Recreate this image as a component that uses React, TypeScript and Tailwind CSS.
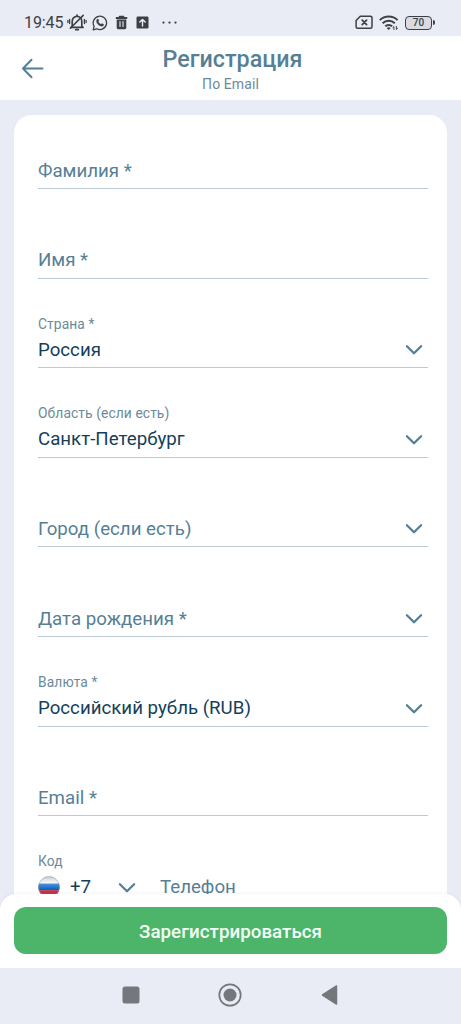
import type { ReactNode } from "react";

function Chevron() {
  return (
    <svg className="mt-px" width="18" height="12" viewBox="0 0 18 12" fill="none" stroke="#557f96" strokeWidth="2.3" strokeLinecap="round" strokeLinejoin="round">
      <path d="M1.9 2.2 9 9.3l7.1-7.1" />
    </svg>
  );
}

type FieldProps = { label?: string; value?: string; placeholder?: string; select?: boolean };

function Field({ label, value, placeholder, select }: FieldProps) {
  return (
    <div className="flex h-[89.6px] shrink-0 flex-col justify-end border-b border-[#bccbd3] pb-[5.4px] first:h-[74px]">
      {label && <div className="mb-[6px] h-4 text-[13.8px] leading-4 tracking-[0.1px] text-[#6b8a9b]">{label}</div>}
      <div className="flex h-6 items-center justify-between pr-[5px]">
        {value ? (
          <span className="text-[18.7px] leading-6 text-[#143f5b]">{value}</span>
        ) : (
          <span className="text-[18.7px] leading-6 text-[#557f96]">{placeholder}</span>
        )}
        {select && <Chevron />}
      </div>
    </div>
  );
}

function Flag() {
  return (
    <svg width="22" height="22" viewBox="0 0 22 22">
      <defs>
        <clipPath id="flag-round"><circle cx="11" cy="11" r="10.7" /></clipPath>
        <linearGradient id="flag-blue" x1="0" y1="0" x2="0" y2="1">
          <stop offset="0" stopColor="#4b97e2" />
          <stop offset="1" stopColor="#0b57b4" />
        </linearGradient>
        <linearGradient id="flag-white" x1="0" y1="0" x2="0" y2="1">
          <stop offset="0" stopColor="#c6cace" />
          <stop offset="1" stopColor="#ffffff" />
        </linearGradient>
      </defs>
      <g clipPath="url(#flag-round)">
        <path fill="url(#flag-white)" d="M0 0h22v8H0z" />
        <path fill="url(#flag-blue)" d="M0 7.4h22v7H0z" />
        <path fill="#c93340" d="M0 14.2h22V22H0z" />
      </g>
      <circle cx="11" cy="11" r="10.4" fill="none" stroke="#8b9299" strokeOpacity=".6" strokeWidth=".8" />
    </svg>
  );
}

function Glyph({ w, h, children }: { w: number; h: number; children: ReactNode }) {
  return (
    <svg className="shrink-0" width={w} height={h} viewBox={`0 0 ${w} ${h}`} fill="none" stroke="#3c4045" strokeLinecap="round" strokeLinejoin="round">
      {children}
    </svg>
  );
}

function StatusBar() {
  return (
    <div className="flex h-9 shrink-0 items-center pt-[9px] pr-[26px] pl-6 text-[#3c4045]">
      <span className="w-[43px] text-[16px] leading-5 tracking-[-0.1px] whitespace-nowrap">19:45</span>
      <div className="flex items-center">
        <Glyph w={20} h={17}>
          <path strokeWidth="1.7" d="M5.2 12.3V7.4c0-2.8 1.9-5 4.8-5s4.8 2.2 4.8 5v4.9l1.3 1.1H3.9l1.3-1.1M10 1.1v1M8.7 15.7h2.6" />
          <path strokeWidth="1.6" d="M3.4 14.2 16.2 1.4" />
          <path strokeWidth="1.3" d="M2.6 5.5v4M.9 6.4v2.2M17.4 5.5v4M19.1 6.4v2.2" />
        </Glyph>
        <span className="w-[5px]" />
        <Glyph w={16} h={16}>
          <path strokeWidth="1.3" d="M1.2 14.8 2.1 11.3a6.7 6.7 0 1 1 2.6 2.5z" />
          <path fill="#3c4045" strokeWidth=".2" d="M5.2 4.3c.5-.5 1-.4 1.2.1l.5 1.2c.1.4-.1.7-.6 1.1.7 1.3 1.5 2 2.8 2.6.5-.7.8-.9 1.1-.7l1.3.6c.4.2.4.5.2 1-.4.9-1.3 1.3-2.2 1.1-2.7-.6-4.6-2.4-5.1-4.8-.1-.8.2-1.6.8-2.2z" />
        </Glyph>
        <span className="w-[7px]" />
        <Glyph w={13} h={15}>
          <path fill="#3c4045" stroke="none" d="M4.2.8h4.6l.7 1.2h2.7v2H.8V2h2.7zM1.7 4.6h9.6v8.2c0 .8-.5 1.4-1.4 1.4H3.1c-.9 0-1.4-.6-1.4-1.4z" />
          <path stroke="#e9ecf4" strokeWidth="1.1" d="M5 6.5v5M8 6.5v5" />
        </Glyph>
        <span className="w-[8px]" />
        <Glyph w={13} h={13}>
          <rect x=".5" y=".5" width="12" height="12" rx="1.2" fill="#3c4045" stroke="none" />
          <path stroke="#e9ecf4" strokeWidth="1.4" d="M6.5 10V3.6M3.8 6l2.7-2.6L9.2 6" />
        </Glyph>
        <span className="w-[12px]" />
        <Glyph w={17} h={4}>
          <g fill="#3c4045" stroke="none"><circle cx="2.5" cy="1.6" r="1.15" /><circle cx="8.5" cy="1.6" r="1.15" /><circle cx="14.5" cy="1.6" r="1.15" /></g>
        </Glyph>
      </div>
      <div className="ml-auto flex items-center">
        <Glyph w={18} h={15}>
          <path strokeWidth="1.5" d="M5.3 1.2h10.2c.9 0 1.5.6 1.5 1.5v9.1c0 .9-.6 1.5-1.5 1.5H2.6c-.9 0-1.5-.6-1.5-1.5V5.6z" />
          <path strokeWidth="1.7" d="M7.2 5.2 11.6 9.6M11.6 5.2 7.2 9.6" />
        </Glyph>
        <span className="w-[6px]" />
        <Glyph w={20} h={16}>
          <path strokeWidth="2" strokeLinecap="butt" d="M.8 5.1c5-4.8 12.8-4.8 17.8 0M3.6 8.3c3.4-3.4 8.8-3.4 12.2 0M6.3 11.3c1.9-1.9 4.9-1.9 6.8 0" />
          <path fill="#3c4045" stroke="none" d="m9.7 15-2-2.1c1.2-1 2.8-1 4 0z" />
          <path strokeWidth="1" d="M14.9 14.5v-3l-1 1M17.4 11.5v3l1-1" />
        </Glyph>
        <span className="w-[6px]" />
        <div className="flex items-center">
          <div className="flex h-[14px] w-[27px] items-center justify-center rounded-[4px] border-[1.5px] border-[#3c4045] bg-[#d9dbe0] text-[10px] leading-none font-medium">70</div>
          <div className="ml-[1px] h-[5px] w-[2px] rounded-r-sm bg-[#3c4045]" />
        </div>
      </div>
    </div>
  );
}

export default function App() {
  return (
    <div className="flex h-[1024px] w-[461px] flex-col overflow-hidden bg-[#e9ecf4] font-['Roboto',sans-serif]">
      <StatusBar />
      <header className="grid h-16 shrink-0 grid-cols-[64px_1fr_64px] items-center bg-white">
        <svg className="ml-[21px]" width="24" height="22" viewBox="0 0 24 22" fill="none" stroke="#557f96" strokeWidth="2" strokeLinecap="round" strokeLinejoin="round">
          <path d="M21.5 11.5H2M10.5 2.8 2 11.5l8.5 8.7" />
        </svg>
        <div className="flex flex-col items-center pt-[2px]">
          <h1 className="pl-[4px] text-[23.3px] leading-7 font-medium text-[#557f96]">Регистрация</h1>
          <p className="mt-px text-[14px] leading-5 tracking-[0.1px] text-[#6b8a9b]">По Email</p>
        </div>
      </header>

      <main className="min-h-0 flex-1 overflow-hidden px-[14px] pt-[15px]">
        <form className="flex h-[900px] flex-col rounded-[18px] bg-white pr-[19px] pl-6">
          <Field placeholder="Фамилия *" />
          <Field placeholder="Имя *" />
          <Field label="Страна *" value="Россия" select />
          <Field label="Область (если есть)" value="Санкт-Петербург" select />
          <Field placeholder="Город (если есть)" select />
          <Field placeholder="Дата рождения *" select />
          <Field label="Валюта *" value="Российский рубль (RUB)" select />
          <Field placeholder="Email *" />
          <div className="flex h-[89.6px] shrink-0 flex-col justify-end pb-[6.4px]">
            <div className="mb-[6px] h-4 text-[13.8px] leading-4 tracking-[0.1px] text-[#6b8a9b]">Код</div>
            <div className="flex h-6 items-center text-[18.7px] leading-6 text-[#557f96]">
              <Flag />
              <span className="ml-[10px] w-[48px] text-[#143f5b]">+7</span>
              <Chevron />
              <span className="ml-[24px]">Телефон</span>
            </div>
          </div>
        </form>
      </main>

      <footer className="relative z-10 -mt-4 h-[74px] shrink-0 rounded-t-[16px] bg-white px-[14px] pt-[13px] shadow-[0_-1px_3px_rgba(60,80,110,0.06)]">
        <button className="flex h-[47px] w-full items-center justify-center rounded-[12px] bg-[#4db56a] pt-[3px] text-[18.8px] font-medium text-[#f3fff5]">Зарегистрироваться</button>
      </footer>
      <nav className="flex h-14 shrink-0 items-start justify-center pt-[15px] pr-[2px]">
        <svg width="218" height="24" viewBox="0 0 218 24">
          <rect x="1.5" y="3.5" width="17" height="17" rx="2.5" fill="#74787d" />
          <circle cx="109" cy="12" r="10.7" fill="none" stroke="#74787d" strokeWidth="1.7" />
          <circle cx="109" cy="12" r="6.5" fill="#74787d" />
          <path d="M201.5 12 215.5 3v18z" fill="#74787d" stroke="#74787d" strokeWidth="1.5" strokeLinejoin="round" />
        </svg>
      </nav>
    </div>
  );
}
